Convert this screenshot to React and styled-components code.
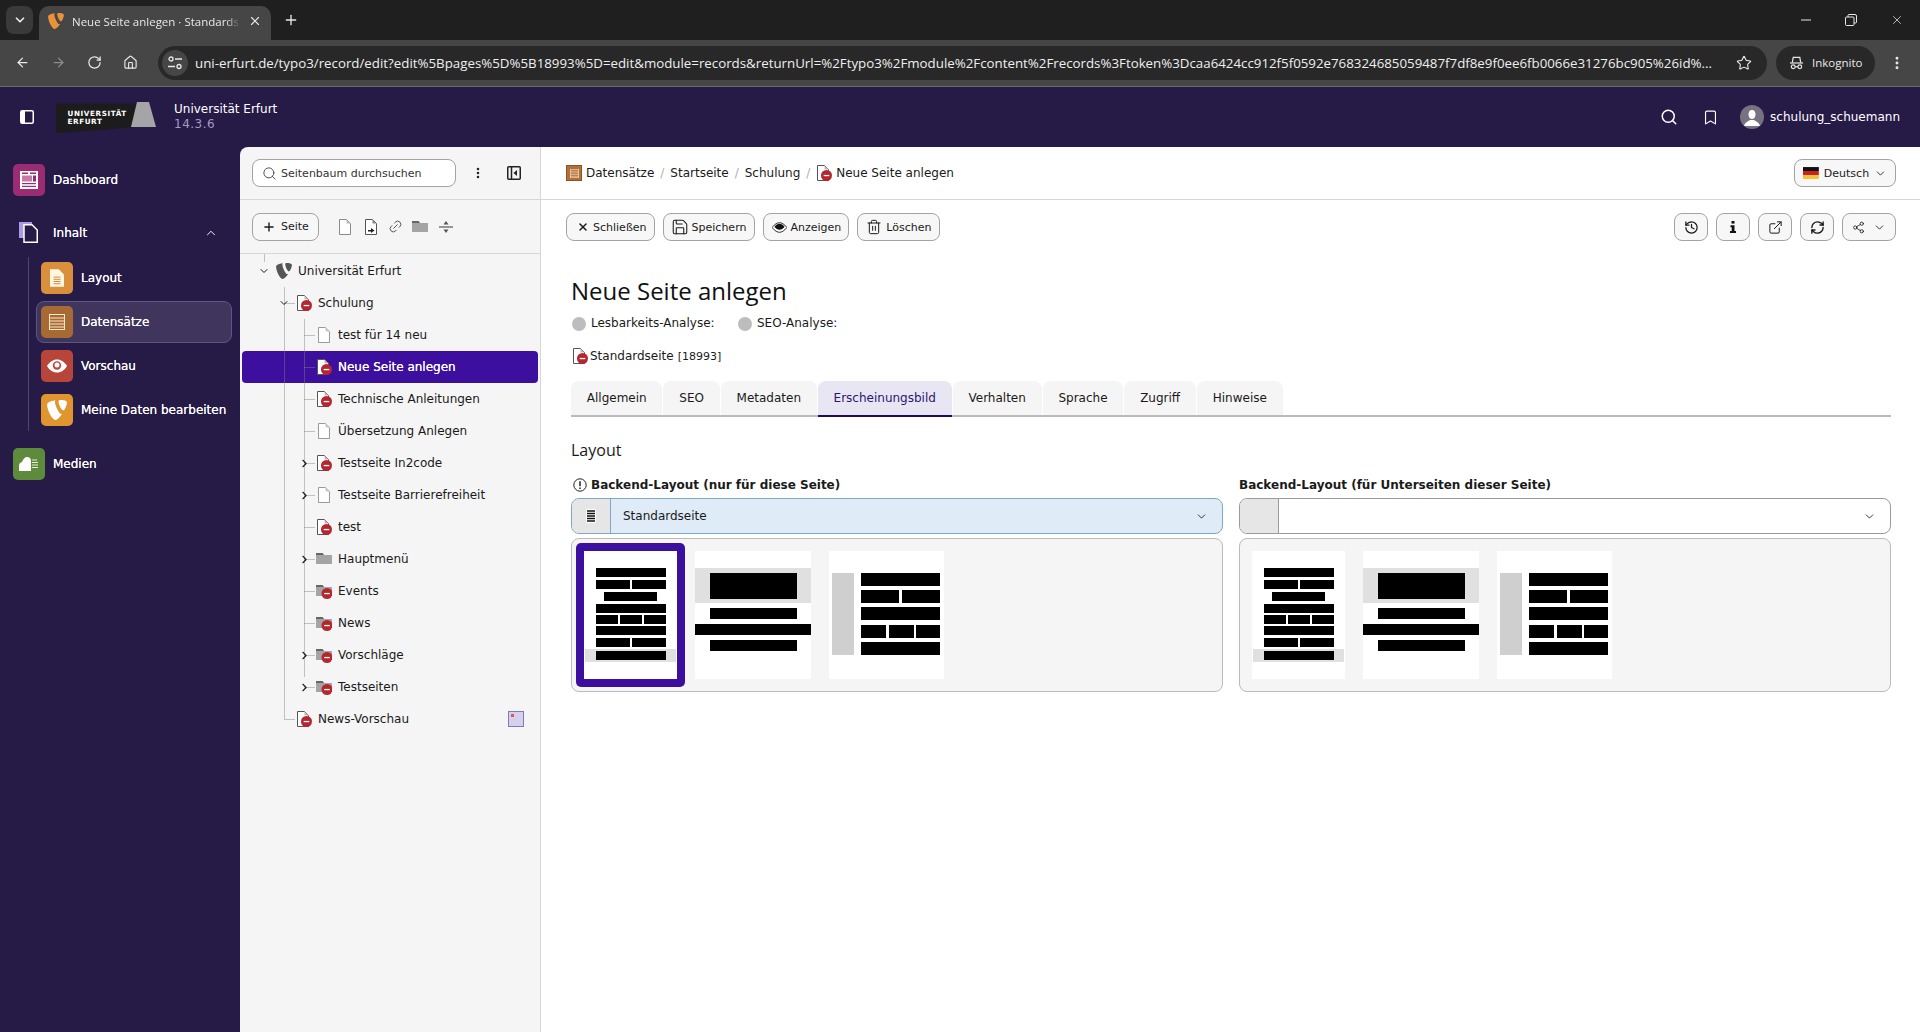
import React from "react";
import styled, { createGlobalStyle } from "styled-components";
import {
  ArrowLeft,
  ArrowRight,
  RotateCw,
  Home,
  Star,
  X,
  Plus,
  ChevronDown,
  ChevronUp,
  ChevronRight,
  Search,
  Bookmark,
  EllipsisVertical,
  Trash2,
  Save,
  History,
  ExternalLink,
  RefreshCw,
  Share2,
  Link2,
} from "lucide-react";

const GlobalStyle = createGlobalStyle`
  html, body {
    margin: 0;
    padding: 0;
    background: #261a47;
  }
  * {
    box-sizing: border-box;
  }
`;

const Page = styled.div`
  width: 1920px;
  height: 1032px;
  overflow: hidden;
  display: flex;
  flex-direction: column;
  font-family: "DejaVu Sans", Verdana, sans-serif;
  font-size: 12px;
  color: #1a1a1a;
`;

/* browser chrome */
const TabStrip = styled.div`
  height: 40px;
  flex: none;
  background: #1f1f1f;
  display: flex;
  align-items: flex-end;
  padding-left: 6px;
  color: #e8e8e8;
  font-family: "Open Sans", sans-serif;
`;

const TabMenu = styled.div`
  width: 27px;
  height: 28px;
  margin-bottom: 6px;
  background: #3a3a3a;
  border-radius: 8px;
  display: flex;
  align-items: center;
  justify-content: center;
`;

const Tab = styled.div`
  width: 232px;
  height: 34px;
  margin-left: 6px;
  background: #464646;
  border-radius: 10px 10px 0 0;
  display: flex;
  align-items: center;
  padding: 0 9px 4px 9px;
  gap: 8px;
  font-size: 11.5px;
`;

const TabTitle = styled.span`
  flex: 1;
  overflow: hidden;
  white-space: nowrap;
  mask-image: linear-gradient(to right, #000 92%, transparent);
`;

const NewTab = styled.div`
  margin: 0 0 12px 12px;
  display: flex;
`;

const WindowButtons = styled.div`
  margin-left: auto;
  height: 40px;
  display: flex;
  align-items: center;
  gap: 33px;
  padding-right: 16px;
`;

const Toolbar = styled.div`
  height: 47px;
  flex: none;
  background: #464646;
  border-bottom: 1px solid #6c6a78;
  display: flex;
  align-items: center;
  padding: 0 0 1px 15px;
  color: #e8e8e8;
  font-family: "Open Sans", sans-serif;
`;

const NavIcons = styled.div`
  display: flex;
  align-items: center;
  gap: 21px;
  width: 143px;
  flex: none;
`;

const UrlPill = styled.div`
  width: 1609px;
  flex: none;
  height: 34px;
  background: #282828;
  border-radius: 17px;
  display: flex;
  align-items: center;
  padding: 0 15px 0 4px;
  font-size: 13.3px;
  color: #efefef;
`;

const SiteInfo = styled.div`
  width: 26px;
  height: 26px;
  border-radius: 50%;
  background: #464646;
  display: flex;
  align-items: center;
  justify-content: center;
  margin-right: 7px;
  flex: none;
`;

const UrlText = styled.span`
  flex: 1;
  white-space: nowrap;
`;

const InkognitoPill = styled.div`
  width: 99px;
  height: 34px;
  margin-left: 9px;
  flex: none;
  background: #282828;
  border-radius: 17px;
  display: flex;
  align-items: center;
  gap: 8px;
  padding-left: 13px;
  font-size: 11.5px;
`;

const ToolbarMenu = styled.div`
  margin-left: 14px;
  display: flex;
`;

/* typo3 header */
const Header = styled.header`
  height: 60px;
  flex: none;
  background: #261a47;
  color: #fff;
  display: flex;
  align-items: center;
  padding: 0 20px 0 20px;
`;

const Logo = styled.div`
  margin-left: 22px;
  display: flex;
`;

const SiteName = styled.div`
  margin-left: 18px;
  font-size: 12px;
  line-height: 15px;
`;

const SiteVersion = styled.div`
  color: #a39bc4;
  letter-spacing: 0.5px;
`;

const HeaderRight = styled.div`
  margin-left: auto;
  display: flex;
  align-items: center;
`;

const HeaderBookmark = styled(Bookmark)`
  margin-left: 24px;
`;

const Avatar = styled.div`
  width: 24px;
  height: 24px;
  margin-left: 21px;
  margin-right: 6px;
  border-radius: 50%;
  background: #77727f;
  overflow: hidden;
  display: flex;
`;

const Body = styled.div`
  flex: 1;
  display: flex;
  min-height: 0;
  background: #261a47;
`;

/* module menu */
const Sidebar = styled.nav`
  width: 240px;
  flex: none;
  padding: 17px 0 0 13px;
  color: #fff;
  text-shadow: 0 0 0.6px #fff;
`;

const TopItem = styled.div`
  height: 32px;
  display: flex;
  align-items: center;
  gap: 8px;
  margin-bottom: ${(p) => p.$after || 0}px;
`;

const ModuleIcon = styled.div`
  width: 32px;
  height: 32px;
  flex: none;
  border-radius: 5px;
  background: ${(p) => p.$bg || "transparent"};
  display: flex;
  align-items: center;
  justify-content: center;
`;

const Caret = styled.div`
  margin-left: auto;
  margin-right: 22px;
  display: flex;
`;

const SubList = styled.div`
  margin: 8px 0 17px 15px;
  width: 205px;
  border-left: 1px solid #4f4670;
  display: flex;
  flex-direction: column;
  gap: 2px;
`;

const SubItem = styled.div`
  height: 42px;
  width: 196px;
  margin-left: 7px;
  padding: 0 4px;
  display: flex;
  align-items: center;
  gap: 8px;
  border-radius: 8px;
  border: 1px solid ${(p) => (p.$active ? "#5f5585" : "transparent")};
  background: ${(p) => (p.$active ? "#40355c" : "transparent")};
  white-space: nowrap;
`;

/* page tree */
const TreePanel = styled.aside`
  width: 301px;
  flex: none;
  background: #f5f5f5;
  border-right: 1px solid #d7d7d7;
  border-top-left-radius: 8px;
`;

const TreeSearchBar = styled.div`
  height: 53px;
  border-bottom: 1px solid #d7d7d7;
  display: flex;
  align-items: center;
  padding: 0 19px 0 12px;
`;

const SearchBox = styled.div`
  width: 204px;
  height: 28px;
  border: 1px solid #a3a3a3;
  border-radius: 8px;
  background: #fff;
  display: flex;
  align-items: center;
  gap: 4px;
  padding: 0 9px;
  font-size: 11px;
  color: #333;
`;

const TreeBarIcons = styled.div`
  margin-left: auto;
  display: flex;
  align-items: center;
  gap: 22px;
`;

const TreeToolbar = styled.div`
  height: 54px;
  border-bottom: 1px solid #d7d7d7;
  display: flex;
  align-items: center;
  padding-left: 12px;
`;

const Button = styled.div`
  height: 28px;
  padding: ${(p) => p.$padding ?? "0 9px"};
  width: ${(p) => (p.$w ? `${p.$w}px` : "auto")};
  border: 1px solid #a3a3a3;
  border-radius: 8px;
  background: #f7f7f7;
  display: flex;
  align-items: center;
  justify-content: ${(p) => (p.$center ? "center" : "flex-start")};
  gap: ${(p) => p.$gap ?? 5}px;
  font-size: 11px;
  color: #1a1a1a;
  white-space: nowrap;
`;

const TreeTools = styled.div`
  margin-left: 19px;
  display: flex;
  align-items: center;
  gap: 9px;
`;

const TiltedLink = styled(Link2)`
  transform: rotate(-45deg);
`;

const SplitSlot = styled.div`
  margin-left: 2px;
  display: flex;
`;

const Tree = styled.div`
  position: relative;
  padding-top: 1px;
`;

const Guide = styled.div`
  position: absolute;
  left: ${(p) => p.$x}px;
  top: ${(p) => p.$top}px;
  height: ${(p) => p.$h}px;
  width: 1px;
  background: rgba(128, 128, 128, 0.45);
  z-index: 1;
`;

const Row = styled.div`
  position: relative;
  height: 32px;
  margin: 0 2px;
  padding: 0 10px 0 ${(p) => 14 + p.$level * 20}px;
  display: flex;
  align-items: center;
  gap: 4px;
  border-radius: 4px;
  background: ${(p) => (p.$selected ? "#3c0f9e" : "transparent")};
  color: ${(p) => (p.$selected ? "#fff" : "#1a1a1a")};
  text-shadow: ${(p) => (p.$selected ? "0 0 0.6px #fff" : "none")};
`;

const Toggle = styled.div`
  position: relative;
  width: 16px;
  height: 16px;
  flex: none;
  display: flex;
  align-items: center;
  justify-content: center;
  svg {
    position: relative;
    z-index: 2;
  }
  &::before {
    content: "";
    position: absolute;
    left: 8px;
    top: 8px;
    width: 11px;
    height: 1px;
    background: rgba(128, 128, 128, 0.45);
    display: ${(p) => (p.$stub ? "block" : "none")};
  }
`;

const RowIcon = styled.div`
  width: 16px;
  height: 16px;
  flex: none;
  margin-right: 2px;
  display: flex;
  justify-content: center;
`;

const RowLabel = styled.span`
  white-space: nowrap;
`;

const RowMark = styled.div`
  margin-left: auto;
  margin-right: 4px;
  width: 16px;
  height: 16px;
  border: 1px solid #8378b8;
  background: #d5d0ee;
  position: relative;
  &::after {
    content: "";
    position: absolute;
    left: 2px;
    top: 2px;
    width: 3px;
    height: 3px;
    background: #e0584f;
  }
`;

/* content */
const Content = styled.main`
  flex: 1;
  min-width: 0;
  background: #fff;
`;

const DocHeader = styled.div`
  height: 53px;
  border-bottom: 1px solid #d7d7d7;
  display: flex;
  align-items: center;
  padding: 0 24px 0 25px;
`;

const Crumbs = styled.div`
  display: flex;
  align-items: center;
`;

const CrumbIcon = styled.div`
  width: 16px;
  height: 16px;
  margin-right: 4px;
  background: #b0703a;
  border: 1px solid #8a5426;
  display: flex;
  align-items: center;
  justify-content: center;
`;

const CrumbSep = styled.span`
  color: #b0b0b0;
  margin: 0 6px;
`;

const DocBar = styled.div`
  height: 54px;
  display: flex;
  align-items: center;
  padding: 0 24px 0 25px;
  gap: 8px;
`;

const Spacer = styled.div`
  flex: 1;
`;

const Form = styled.div`
  padding: 20px 29px 0 30px;
`;

const Title = styled.h1`
  margin: 0;
  font-family: "Open Sans", sans-serif;
  font-weight: 400;
  font-size: 24px;
  line-height: 33px;
  color: #111;
`;

const AnalysisRow = styled.div`
  margin-top: 8px;
  height: 16px;
  display: flex;
  align-items: center;
`;

const Dot = styled.span`
  width: 14px;
  height: 14px;
  border-radius: 50%;
  background: #bdbdbd;
  margin: 1px 5px 0 1px;
`;

const AnalysisLabel = styled.span`
  width: 146px;
`;

const RecordRow = styled.div`
  margin-top: 17px;
  height: 16px;
  display: flex;
  align-items: center;
  gap: 2px;
  padding-left: 1px;
`;

const RecordId = styled.span`
  font-size: 11px;
  margin-left: 2px;
`;

const Tabs = styled.div`
  margin-top: 17px;
  height: 36px;
  display: flex;
  gap: 1px;
  border-bottom: 2px solid #bbb;
`;

const TabItem = styled.div`
  height: 36px;
  padding: 0 15.8px;
  display: flex;
  align-items: center;
  background: ${(p) => (p.$active ? "#e9e6f3" : "#f5f5f5")};
  border-bottom: 2px solid ${(p) => (p.$active ? "#1e0a5e" : "#bbb")};
  color: ${(p) => (p.$active ? "#2a1670" : "#1a1a1a")};
  border-radius: 8px 8px 0 0;
  white-space: nowrap;
`;

const SectionTitle = styled.h2`
  margin: 21px 0 0;
  font-family: "Open Sans", sans-serif;
  font-weight: 400;
  font-size: 16px;
  line-height: 24px;
`;

const Columns = styled.div`
  margin-top: 15px;
  display: grid;
  grid-template-columns: 652px 652px;
  column-gap: 16px;
`;

const FieldLabel = styled.div`
  height: 16px;
  margin-bottom: 5px;
  display: flex;
  align-items: center;
  gap: 4px;
  font-weight: 700;
  white-space: nowrap;
  svg {
    margin-left: 2px;
  }
`;

const Select = styled.div`
  height: 36px;
  display: flex;
  border: 1px solid ${(p) => (p.$changed ? "#7fa8c7" : "#9a9a9a")};
  border-radius: 8px;
  overflow: hidden;
  background: ${(p) => (p.$changed ? "#dfebf6" : "#fff")};
`;

const SelectAddon = styled.div`
  width: 39px;
  flex: none;
  background: #e6e6e6;
  border-right: 1px solid ${(p) => (p.$changed ? "#7fa8c7" : "#9a9a9a")};
  display: flex;
  align-items: center;
  justify-content: center;
`;

const SelectValue = styled.div`
  flex: 1;
  display: flex;
  align-items: center;
  padding: 0 14px 0 12px;
  justify-content: space-between;
`;

const Thumbs = styled.div`
  margin-top: 4px;
  height: 154px;
  border: 1px solid #bbb;
  border-radius: 8px;
  background: #f5f5f5;
  display: flex;
  align-items: center;
  padding-left: 4px;
`;

const ThumbFrame = styled.div`
  padding: 8px;
  height: 144px;
  flex: none;
  margin-right: ${(p) => p.$after || 0}px;
  border-radius: 5px;
  background: ${(p) => (p.$selected ? "#3c0f9e" : "transparent")};
  display: flex;
`;

/* icons */
const Typo3Path =
  "M18.08 16.539c-.356.105-.64.144-1.012.144-3.048 0-7.524-10.652-7.524-14.197 0-1.305.31-1.74.745-2.114C6.56.808 2.082 2.18.65 3.925c-.31.436-.497 1.12-.497 1.99C.153 11.445 6.06 24 10.227 24c1.928 0 5.18-3.17 7.853-7.461M16.133 0c3.858 0 7.714.622 7.714 2.798 0 4.418-2.8 9.771-4.23 9.771-2.549 0-5.72-7.09-5.72-10.635C13.897.31 14.518 0 16.133 0";

const Typo3 = ({ size = 16, color = "#fff" }) => (
  <svg width={size} height={size} viewBox="0 0 24 24">
    <path d={Typo3Path} fill={color} />
  </svg>
);

const HideBadge = () => (
  <g>
    <circle cx="10.5" cy="10.5" r="5.5" fill="#b5262f" />
    <rect x="7.7" y="9.9" width="5.6" height="1.3" fill="#fff" />
  </g>
);

const PageIcon = ({ hidden }) => (
  <svg width="16" height="16" viewBox="0 0 16 16">
    <path d="M1.5 .5H8.5L12.5 4.5V15.5H1.5Z" fill="#fff" stroke={hidden ? "#555" : "#8a8a8a"} />
    <path d="M8.5 .5V4.5H12.5Z" fill="#bbb" />
    {hidden && <HideBadge />}
  </svg>
);

const FolderIcon = ({ hidden }) => (
  <svg width="16" height="16" viewBox="0 0 16 16">
    <path d="M0 2H6.5L8 4H16V13H0Z" fill="#a4a4a4" />
    <path d="M0 2H6.5L8 4H0Z" fill="#666" />
    {hidden && (
      <g>
        <circle cx="11" cy="10.5" r="5.5" fill="#b5262f" />
        <rect x="8.2" y="9.9" width="5.6" height="1.3" fill="#fff" />
      </g>
    )}
  </svg>
);

const GreyPage = () => (
  <svg width="14" height="16" viewBox="0 0 14 16">
    <path d="M1.5 .5H8.5L12.5 4.5V15.5H1.5Z" fill="#fff" stroke="#999" />
    <path d="M8.5 .5V4.5H12.5Z" fill="#ccc" />
  </svg>
);

const PageNewIcon = () => (
  <svg width="16" height="16" viewBox="0 0 16 16">
    <path d="M2.5 .5H9.5L13.5 4.5V15.5H2.5Z" fill="#fff" stroke="#555" />
    <path d="M9.5 .5V4.5H13.5Z" fill="#888" />
    <path d="M5 11H8V9L11.5 11.5 8 14V12.5H5Z" fill="#222" />
  </svg>
);

const SplitIcon = () => (
  <svg width="14" height="14" viewBox="0 0 14 14">
    <path d="M0 7H14" stroke="#555" strokeWidth="1.2" />
    <path d="M7 1L9.5 4.5H4.5ZM7 13L4.5 9.5H9.5Z" fill="#555" />
  </svg>
);

const CollapseIcon = () => (
  <svg width="14" height="14" viewBox="0 0 14 14">
    <rect x=".75" y=".75" width="12.5" height="12.5" rx="1" fill="none" stroke="#222" strokeWidth="1.5" />
    <path d="M4.5 1V13" stroke="#222" strokeWidth="1.5" />
    <path d="M10 4V10L6.5 7Z" fill="#222" />
  </svg>
);

const SidebarToggle = () => (
  <svg width="14" height="14" viewBox="0 0 14 14">
    <rect x=".75" y=".75" width="12.5" height="12.5" rx="1.5" fill="none" stroke="#fff" strokeWidth="1.5" />
    <rect x="1" y="1" width="4" height="12" fill="#fff" />
  </svg>
);

const UniLogo = () => (
  <svg width="100" height="31" viewBox="0 0 100 31">
    <path d="M0 1.5H80L76 25.500 0 31Z" fill="#1c1c1c" />
    <path d="M81 0H93L100 25H75Z" fill="#a5a5a8" />
    <text x="11.500" y="14" fontFamily="DejaVu Sans" fontWeight="700" fontSize="7.2" fill="#fff" letterSpacing="0.6">UNIVERSITÄT</text>
    <text x="11.500" y="22" fontFamily="DejaVu Sans" fontWeight="700" fontSize="7.2" fill="#fff" letterSpacing="0.6">ERFURT</text>
  </svg>
);

const DashboardGlyph = () => (
  <svg width="18" height="18" viewBox="0 0 18 18">
    <rect width="18" height="18" fill="#fff" />
    <rect x="2" y="1.500" width="6" height="1.500" fill="#9b2b72" />
    <rect x="10" y="1.500" width="6" height="1.500" fill="#9b2b72" />
    <rect x="2" y="4.500" width="10" height="6" fill="#c77aa8" />
    <rect x="13" y="4.500" width="3" height="6" fill="#9b2b72" />
    <rect x="2" y="12" width="14" height="1.200" fill="#9b2b72" />
    <rect x="2" y="14.800" width="14" height="1.200" fill="#9b2b72" />
  </svg>
);

const ContentGlyph = () => (
  <svg width="20" height="22" viewBox="0 0 20 22">
    <rect x="0" y="0" width="13" height="16" fill="#a99be6" />
    <path d="M5 2.75H13L18.25 8V20.25H5Z" fill="#261a47" stroke="#fff" strokeWidth="1.5" />
  </svg>
);

const LayoutGlyph = () => (
  <svg width="14" height="18" viewBox="0 0 16 20">
    <path d="M0 0H10L16 6V20H0Z" fill="#fff6e0" />
    <path d="M4 9H12M4 11.500H12M4 14H12M4 16.500H12" stroke="#c87f30" strokeWidth="1" />
  </svg>
);

const RecordsGlyph = ({ size = 16, color = "#fde9c9" }) => (
  <svg width={size} height={size} viewBox="0 0 16 16">
    <rect x=".5" y=".5" width="15" height="15" fill="none" stroke={color} />
    <path d="M0 4H16M0 7H16M0 10H16M0 13H16" stroke={color} strokeWidth="1" />
  </svg>
);

const MediaGlyph = () => (
  <svg width="20" height="14" viewBox="0 0 20 14">
    <path d="M0 14V9C0 6 2 5 3 5 4 2 6 0 8 0 11 0 12 2 12 4V14Z" fill="#fff" />
    <path d="M13 3H18M13 5.500H19M13 8H19M13 10.500H19" stroke="#e4f0d6" strokeWidth="1" />
  </svg>
);

const Flag = () => (
  <svg width="16" height="12" viewBox="0 0 16 12">
    <rect width="16" height="4" y="0" fill="#111" />
    <rect width="16" height="4" y="4" fill="#c8202a" />
    <rect width="16" height="4" y="8" fill="#f4c430" />
  </svg>
);

const Incognito = () => (
  <svg width="15" height="14" viewBox="0 0 16 14" fill="none" stroke="#e8e8e8" strokeWidth="1.3">
    <path d="M1 7H15" />
    <path d="M3.500 6.500L4.500 1H11.500L12.500 6.500" />
    <circle cx="4.500" cy="11" r="2" />
    <circle cx="11.500" cy="11" r="2" />
    <path d="M6.500 11H9.500" />
  </svg>
);

const SiteControls = () => (
  <svg width="16" height="14" viewBox="0 0 16 14" fill="none" stroke="#e8e8e8" strokeWidth="1.3">
    <circle cx="4" cy="3" r="2" />
    <path d="M8 3H15M1 10.500H8" />
    <circle cx="12" cy="10.500" r="2" />
  </svg>
);

const RestoreIcon = () => (
  <svg width="12" height="12" viewBox="0 0 12 12" fill="none" stroke="#e8e8e8" strokeWidth="1">
    <rect x=".5" y="3" width="8.5" height="8.5" rx="1" />
    <path d="M3 3V1.500A1 1 0 0 1 4 .5H10A1.500 1.500 0 0 1 11.500 2V8A1 1 0 0 1 10.500 9H9" />
  </svg>
);

const MinimizeIcon = () => (
  <svg width="12" height="12" viewBox="0 0 12 12">
    <path d="M1 6H11" stroke="#e8e8e8" strokeWidth="1" />
  </svg>
);

const AlertIcon = () => (
  <svg width="14" height="14" viewBox="0 0 14 14" fill="none" stroke="#222">
    <circle cx="7" cy="7" r="6.200" />
    <path d="M7 3.200V8.200" strokeWidth="1.500" />
    <path d="M7 9.400V11" strokeWidth="1.500" />
  </svg>
);

const UserGlyph = () => (
  <svg width="24" height="24" viewBox="0 0 24 24">
    <path d="M12 5C9.500 5 8.500 7 8.500 9.500 8.500 12 10 14 12 14S15.500 12 15.500 9.500C15.500 7 14.500 5 12 5Z" fill="#fff" />
    <path d="M4 21C5 17 9 16 10 15H14C15 16 19 17 20 21Z" fill="#fff" />
  </svg>
);

const EyeGlyph = () => (
  <svg width="20" height="14" viewBox="0 0 20 14">
    <path d="M0 7C3 2 7 .5 10 .5S17 2 20 7C17 12 13 13.500 10 13.500S3 12 0 7Z" fill="#fff" />
    <circle cx="10" cy="6.500" r="4.200" fill="#b8453a" />
    <circle cx="10" cy="6" r="2.500" fill="#fff" />
  </svg>
);

const ShowEye = () => (
  <svg width="15" height="11" viewBox="0 0 16 12">
    <path d="M0 6C3 2 6 .8 8 .8S13 2 16 6C13 10 10 11.200 8 11.200S3 10 0 6Z" fill="#fff" stroke="#111" />
    <path d="M2.500 5.500C4 3 6 2 8 2S12 3 13.500 5.500C12 7 10 8.500 8 8.500S4 7 2.500 5.500Z" fill="#111" />
  </svg>
);

const BoldInfo = () => (
  <svg width="14" height="14" viewBox="0 0 14 14">
    <rect x="5.500" y="1" width="3" height="2.600" fill="#111" />
    <path d="M4.500 5.200H8.500V11H10V13H4V11H5.700V7.200H4.500Z" fill="#111" />
  </svg>
);

const Rects = ({ list, fill = "#000" }) =>
  list.map(([x, y, w, h], i) => <rect key={i} x={x} y={y} width={w} height={h} fill={fill} />);

const ThumbStandard = () => (
  <svg width="93" height="128" viewBox="0 0 93 128">
    <rect width="93" height="128" fill="#fff" />
    <rect x="1" y="98" width="91" height="13" fill="#e0e0e0" />
    <Rects
      list={[
        [12, 17, 70, 9],
        [12, 29, 34, 9],
        [48, 29, 34, 9],
        [20, 41, 53, 9],
        [12, 53, 70, 9],
        [12, 64, 22, 9],
        [36, 64, 22, 9],
        [60, 64, 22, 9],
        [12, 75, 70, 9],
        [12, 87, 34, 9],
        [48, 87, 34, 9],
        [12, 100, 70, 9],
      ]}
    />
  </svg>
);

const ThumbHero = () => (
  <svg width="116" height="128" viewBox="0 0 116 128">
    <rect width="116" height="128" fill="#fff" />
    <rect y="17" width="116" height="35" fill="#e0e0e0" />
    <Rects
      list={[
        [15, 22, 87, 26],
        [15, 57, 87, 11],
        [0, 73, 116, 11],
        [15, 89, 87, 11],
      ]}
    />
  </svg>
);

const ThumbAside = () => (
  <svg width="115" height="128" viewBox="0 0 115 128">
    <rect width="115" height="128" fill="#fff" />
    <rect x="3" y="22" width="22" height="82" fill="#cfcfcf" />
    <Rects
      list={[
        [32, 22, 79, 13],
        [32, 39, 38, 13],
        [73, 39, 38, 13],
        [32, 56, 79, 13],
        [32, 74, 25, 13],
        [60, 74, 25, 13],
        [87, 74, 24, 13],
        [32, 91, 79, 13],
      ]}
    />
  </svg>
);

const TreeIcon = ({ kind }) => {
  if (kind === "root") return <Typo3 size={16} color="#555" />;
  if (kind === "page") return <GreyPage />;
  if (kind === "hidden") return <PageIcon hidden />;
  if (kind === "folder") return <FolderIcon />;
  return <FolderIcon hidden />;
};

const treeRows = [
  { level: 0, label: "Universität Erfurt", kind: "root", toggle: "open" },
  { level: 1, label: "Schulung", kind: "hidden", toggle: "open" },
  { level: 2, label: "test für 14 neu", kind: "page" },
  { level: 2, label: "Neue Seite anlegen", kind: "hidden", selected: true },
  { level: 2, label: "Technische Anleitungen", kind: "hidden" },
  { level: 2, label: "Übersetzung Anlegen", kind: "page" },
  { level: 2, label: "Testseite In2code", kind: "hidden", toggle: "closed" },
  { level: 2, label: "Testseite Barrierefreiheit", kind: "page", toggle: "closed" },
  { level: 2, label: "test", kind: "hidden" },
  { level: 2, label: "Hauptmenü", kind: "folder", toggle: "closed" },
  { level: 2, label: "Events", kind: "hiddenFolder" },
  { level: 2, label: "News", kind: "hiddenFolder" },
  { level: 2, label: "Vorschläge", kind: "hiddenFolder", toggle: "closed" },
  { level: 2, label: "Testseiten", kind: "hiddenFolder", toggle: "closed" },
  { level: 1, label: "News-Vorschau", kind: "hidden", mark: true },
];

const tabs = ["Allgemein", "SEO", "Metadaten", "Erscheinungsbild", "Verhalten", "Sprache", "Zugriff", "Hinweise"];

const url =
  "uni-erfurt.de/typo3/record/edit?edit%5Bpages%5D%5B18993%5D=edit&module=records&returnUrl=%2Ftypo3%2Fmodule%2Fcontent%2Frecords%3Ftoken%3Dcaa6424cc912f5f0592e768324685059487f7df8e9f0ee6fb0066e31276bc905%26id%...";

const ThumbRow = ({ selected }) => (
  <Thumbs>
    <ThumbFrame $selected={selected} $after={2}>
      <ThumbStandard />
    </ThumbFrame>
    <ThumbFrame $after={2}>
      <ThumbHero />
    </ThumbFrame>
    <ThumbFrame>
      <ThumbAside />
    </ThumbFrame>
  </Thumbs>
);

const App = () => {
  return (
    <Page>
      <GlobalStyle />
      <TabStrip>
        <TabMenu>
          <ChevronDown size={14} strokeWidth={3} color="#e8e8e8" />
        </TabMenu>
        <Tab>
          <Typo3 size={16} color="#e8923a" />
          <TabTitle>Neue Seite anlegen · Standards</TabTitle>
          <X size={14} strokeWidth={2} />
        </Tab>
        <NewTab>
          <Plus size={16} strokeWidth={2} />
        </NewTab>
        <WindowButtons>
          <MinimizeIcon />
          <RestoreIcon />
          <X size={14} strokeWidth={1.3} />
        </WindowButtons>
      </TabStrip>

      <Toolbar>
        <NavIcons>
          <ArrowLeft size={15} strokeWidth={2} />
          <ArrowRight size={15} strokeWidth={2} color="#8c8c8c" />
          <RotateCw size={15} strokeWidth={2} />
          <Home size={15} strokeWidth={1.8} />
        </NavIcons>
        <UrlPill>
          <SiteInfo>
            <SiteControls />
          </SiteInfo>
          <UrlText>{url}</UrlText>
          <Star size={16} strokeWidth={1.6} />
        </UrlPill>
        <InkognitoPill>
          <Incognito />
          Inkognito
        </InkognitoPill>
        <ToolbarMenu>
          <EllipsisVertical size={16} strokeWidth={2.4} />
        </ToolbarMenu>
      </Toolbar>

      <Header>
        <SidebarToggle />
        <Logo>
          <UniLogo />
        </Logo>
        <SiteName>
          <div>Universität Erfurt</div>
          <SiteVersion>14.3.6</SiteVersion>
        </SiteName>
        <HeaderRight>
          <Search size={18} strokeWidth={2} />
          <HeaderBookmark size={17} strokeWidth={1.6} />
          <Avatar>
            <UserGlyph />
          </Avatar>
          <span>schulung_schuemann</span>
        </HeaderRight>
      </Header>

      <Body>
        <Sidebar>
          <TopItem $after={21}>
            <ModuleIcon $bg="#9b2b72">
              <DashboardGlyph />
            </ModuleIcon>
            Dashboard
          </TopItem>
          <TopItem>
            <ModuleIcon>
              <ContentGlyph />
            </ModuleIcon>
            Inhalt
            <Caret>
              <ChevronUp size={14} strokeWidth={1.6} />
            </Caret>
          </TopItem>
          <SubList>
            <SubItem>
              <ModuleIcon $bg="#d98f3c">
                <LayoutGlyph />
              </ModuleIcon>
              Layout
            </SubItem>
            <SubItem $active>
              <ModuleIcon $bg="#a86a35">
                <RecordsGlyph />
              </ModuleIcon>
              Datensätze
            </SubItem>
            <SubItem>
              <ModuleIcon $bg="#b8453a">
                <EyeGlyph />
              </ModuleIcon>
              Vorschau
            </SubItem>
            <SubItem>
              <ModuleIcon $bg="#e0952e">
                <Typo3 size={20} />
              </ModuleIcon>
              Meine Daten bearbeiten
            </SubItem>
          </SubList>
          <TopItem>
            <ModuleIcon $bg="#5e8a3c">
              <MediaGlyph />
            </ModuleIcon>
            Medien
          </TopItem>
        </Sidebar>

        <TreePanel>
          <TreeSearchBar>
            <SearchBox>
              <Search size={15} strokeWidth={1.5} color="#444" />
              Seitenbaum durchsuchen
            </SearchBox>
            <TreeBarIcons>
              <EllipsisVertical size={14} strokeWidth={2.4} color="#222" />
              <CollapseIcon />
            </TreeBarIcons>
          </TreeSearchBar>
          <TreeToolbar>
            <Button>
              <Plus size={14} strokeWidth={2.4} />
              Seite
            </Button>
            <TreeTools>
              <PageIcon />
              <PageNewIcon />
              <TiltedLink size={15} strokeWidth={1.5} color="#555" />
              <FolderIcon />
              <SplitSlot>
                <SplitIcon />
              </SplitSlot>
            </TreeTools>
          </TreeToolbar>
          <Tree>
            <Guide $x={24} $top={0} $h={8} />
            <Guide $x={44} $top={33} $h={432} />
            <Guide $x={64} $top={65} $h={358} />
            {treeRows.map((row) => (
              <Row key={row.label} $level={row.level} $selected={row.selected}>
                <Toggle $stub={row.level > 0}>
                  {row.toggle === "open" && <ChevronDown size={12} strokeWidth={2} />}
                  {row.toggle === "closed" && <ChevronRight size={13} strokeWidth={2} />}
                </Toggle>
                <RowIcon>
                  <TreeIcon kind={row.kind} />
                </RowIcon>
                <RowLabel>{row.label}</RowLabel>
                {row.mark && <RowMark />}
              </Row>
            ))}
          </Tree>
        </TreePanel>

        <Content>
          <DocHeader>
            <Crumbs>
              <CrumbIcon>
                <RecordsGlyph size={9} />
              </CrumbIcon>
              Datensätze
              <CrumbSep>/</CrumbSep>
              Startseite
              <CrumbSep>/</CrumbSep>
              Schulung
              <CrumbSep>/</CrumbSep>
              <PageIcon hidden />
              &nbsp;Neue Seite anlegen
            </Crumbs>
            <Spacer />
            <Button $w={102} $padding="0 8px">
              <Flag />
              Deutsch
              <ChevronDown size={13} strokeWidth={1.6} />
            </Button>
          </DocHeader>
          <DocBar>
            <Button $padding="0 7px 0 10px" $gap={4}>
              <X size={12} strokeWidth={3} />
              Schließen
            </Button>
            <Button $padding="0 8px 0 7px" $gap={3}>
              <Save size={18} strokeWidth={1.4} />
              Speichern
            </Button>
            <Button $padding="0 7px 0 8px" $gap={3}>
              <ShowEye />
              Anzeigen
            </Button>
            <Button $padding="0 8px" $gap={4}>
              <Trash2 size={16} strokeWidth={1.5} />
              Löschen
            </Button>
            <Spacer />
            <Button $w={34} $center $padding="0">
              <History size={15} strokeWidth={2} />
            </Button>
            <Button $w={34} $center $padding="0">
              <BoldInfo />
            </Button>
            <Button $w={34} $center $padding="0">
              <ExternalLink size={15} strokeWidth={1.6} />
            </Button>
            <Button $w={34} $center $padding="0">
              <RefreshCw size={15} strokeWidth={2.2} />
            </Button>
            <Button $w={54} $center $padding="0" $gap={8}>
              <Share2 size={13} strokeWidth={1.5} />
              <ChevronDown size={13} strokeWidth={1.6} />
            </Button>
          </DocBar>
          <Form>
            <Title>Neue Seite anlegen</Title>
            <AnalysisRow>
              <Dot />
              <AnalysisLabel>Lesbarkeits-Analyse:</AnalysisLabel>
              <Dot />
              <span>SEO-Analyse:</span>
            </AnalysisRow>
            <RecordRow>
              <PageIcon hidden />
              Standardseite <RecordId>[18993]</RecordId>
            </RecordRow>
            <Tabs>
              {tabs.map((tab) => (
                <TabItem key={tab} $active={tab === "Erscheinungsbild"}>
                  {tab}
                </TabItem>
              ))}
            </Tabs>
            <SectionTitle>Layout</SectionTitle>
            <Columns>
              <div>
                <FieldLabel>
                  <AlertIcon />
                  Backend-Layout (nur für diese Seite)
                </FieldLabel>
                <Select $changed>
                  <SelectAddon $changed>
                    <svg width="10" height="14" viewBox="0 0 10 14">
                      <rect width="10" height="14" fill="#fff" />
                      <path d="M1 2H9M1 4.500H9M1 7H9M1 9.500H9M1 12H9" stroke="#111" strokeWidth="1.600" />
                    </svg>
                  </SelectAddon>
                  <SelectValue>
                    Standardseite
                    <ChevronDown size={13} strokeWidth={1.6} />
                  </SelectValue>
                </Select>
                <ThumbRow selected />
              </div>
              <div>
                <FieldLabel>Backend-Layout (für Unterseiten dieser Seite)</FieldLabel>
                <Select>
                  <SelectAddon />
                  <SelectValue>
                    <span />
                    <ChevronDown size={13} strokeWidth={1.6} />
                  </SelectValue>
                </Select>
                <ThumbRow />
              </div>
            </Columns>
          </Form>
        </Content>
      </Body>
    </Page>
  );
};

export default App;
